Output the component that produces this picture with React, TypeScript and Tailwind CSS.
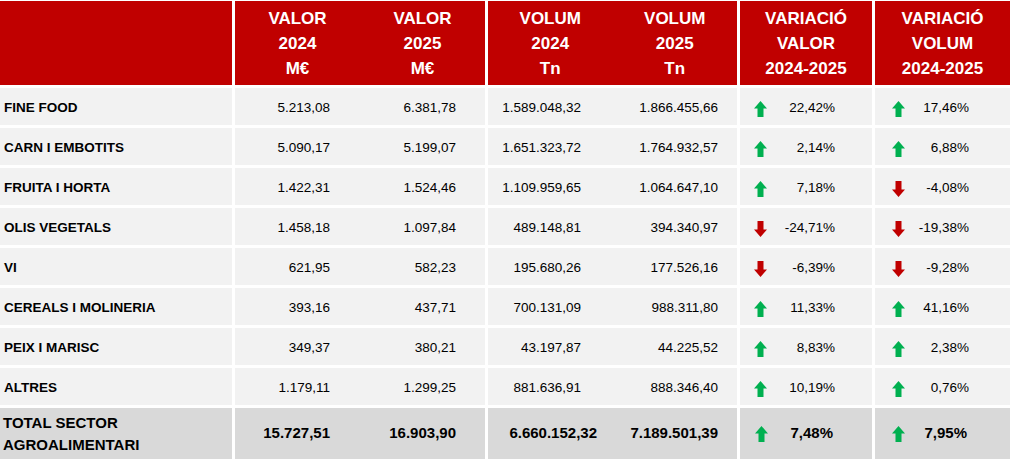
import React from "react";

type Row = {
  name: string;
  v24: string;
  v25: string;
  t24: string;
  t25: string;
  varV: string;
  upV: boolean;
  varT: string;
  upT: boolean;
};

const rows: Row[] = [
  { name: "FINE FOOD", v24: "5.213,08", v25: "6.381,78", t24: "1.589.048,32", t25: "1.866.455,66", varV: "22,42%", upV: true, varT: "17,46%", upT: true },
  { name: "CARN I EMBOTITS", v24: "5.090,17", v25: "5.199,07", t24: "1.651.323,72", t25: "1.764.932,57", varV: "2,14%", upV: true, varT: "6,88%", upT: true },
  { name: "FRUITA I HORTA", v24: "1.422,31", v25: "1.524,46", t24: "1.109.959,65", t25: "1.064.647,10", varV: "7,18%", upV: true, varT: "-4,08%", upT: false },
  { name: "OLIS VEGETALS", v24: "1.458,18", v25: "1.097,84", t24: "489.148,81", t25: "394.340,97", varV: "-24,71%", upV: false, varT: "-19,38%", upT: false },
  { name: "VI", v24: "621,95", v25: "582,23", t24: "195.680,26", t25: "177.526,16", varV: "-6,39%", upV: false, varT: "-9,28%", upT: false },
  { name: "CEREALS I MOLINERIA", v24: "393,16", v25: "437,71", t24: "700.131,09", t25: "988.311,80", varV: "11,33%", upV: true, varT: "41,16%", upT: true },
  { name: "PEIX I MARISC", v24: "349,37", v25: "380,21", t24: "43.197,87", t25: "44.225,52", varV: "8,83%", upV: true, varT: "2,38%", upT: true },
  { name: "ALTRES", v24: "1.179,11", v25: "1.299,25", t24: "881.636,91", t25: "888.346,40", varV: "10,19%", upV: true, varT: "0,76%", upT: true },
];

function Arrow({ up }: { up: boolean }) {
  return (
    <svg width="13" height="16" viewBox="0 0 13 16" className="shrink-0">
      {up ? (
        <polygon points="6.5,0 13,7.5 9.5,7.5 9.5,16 3.5,16 3.5,7.5 0,7.5" fill="#00b050" />
      ) : (
        <polygon points="3.5,0 9.5,0 9.5,8.5 13,8.5 6.5,16 0,8.5 3.5,8.5" fill="#c00000" />
      )}
    </svg>
  );
}

function Head({ lines }: { lines: string[] }) {
  return (
    <div className="flex-1 flex flex-col items-center justify-center text-white font-bold text-[17px] leading-[25px]">
      {lines.map((l, i) => (
        <span key={i}>{l}</span>
      ))}
    </div>
  );
}

function VarCell({ up, value, pl, pr, bold }: { up: boolean; value: string; pl: string; pr: string; bold?: boolean }) {
  return (
    <div className={`flex items-center justify-between ${pl} ${pr} ${bold ? "bg-[#d9d9d9] font-bold text-[15px]" : "bg-[#f2f2f2] pt-[4px]"}`}>
      <Arrow up={up} />
      <span>{value}</span>
    </div>
  );
}

export default function App() {
  return (
    <div className="w-[1010px] h-[459px] bg-white pt-[1px] overflow-hidden" style={{ fontFamily: '"Liberation Sans", Arial, sans-serif' }}>
      <div className="grid grid-cols-[232px_250px_249px_132px_135px] grid-rows-[84px_repeat(8,37px)_51px] gap-[3px] text-black text-[13.5px]">
        {/* header */}
        <div className="bg-[#c00000]" />
        <div className="bg-[#c00000] flex">
          <Head lines={["VALOR", "2024", "M€"]} />
          <Head lines={["VALOR", "2025", "M€"]} />
        </div>
        <div className="bg-[#c00000] flex">
          <Head lines={["VOLUM", "2024", "Tn"]} />
          <Head lines={["VOLUM", "2025", "Tn"]} />
        </div>
        <div className="bg-[#c00000] flex">
          <Head lines={["VARIACIÓ", "VALOR", "2024-2025"]} />
        </div>
        <div className="bg-[#c00000] flex">
          <Head lines={["VARIACIÓ", "VOLUM", "2024-2025"]} />
        </div>

        {rows.map((r) => (
          <React.Fragment key={r.name}>
            <div className="bg-[#f2f2f2] flex items-center pl-[4px] pt-[4px] font-bold">{r.name}</div>
            <div className="bg-[#f2f2f2] flex items-center pt-[4px]">
              <span className="w-[125px] text-right pr-[30px]">{r.v24}</span>
              <span className="w-[125px] text-right pr-[29px]">{r.v25}</span>
            </div>
            <div className="bg-[#f2f2f2] flex items-center pt-[4px]">
              <span className="w-[125px] text-right pr-[32px]">{r.t24}</span>
              <span className="w-[124px] text-right pr-[19px]">{r.t25}</span>
            </div>
            <VarCell up={r.upV} value={r.varV} pl="pl-[14px]" pr="pr-[37px]" />
            <VarCell up={r.upT} value={r.varT} pl="pl-[17px]" pr="pr-[41px]" />
          </React.Fragment>
        ))}

        {/* total */}
        <div className="bg-[#d9d9d9] flex flex-col justify-center pl-[3px] font-bold text-[15px] leading-[22px]">
          <span>TOTAL SECTOR</span>
          <span>AGROALIMENTARI</span>
        </div>
        <div className="bg-[#d9d9d9] flex items-center font-bold text-[15px]">
          <span className="w-[125px] text-right pr-[30px]">15.727,51</span>
          <span className="w-[125px] text-right pr-[29px]">16.903,90</span>
        </div>
        <div className="bg-[#d9d9d9] flex items-center font-bold text-[15px]">
          <span className="w-[125px] text-right pr-[16px]">6.660.152,32</span>
          <span className="w-[124px] text-right pr-[19px]">7.189.501,39</span>
        </div>
        <VarCell up value="7,48%" pl="pl-[15px]" pr="pr-[39px]" bold />
        <VarCell up value="7,95%" pl="pl-[17px]" pr="pr-[43px]" bold />
      </div>
    </div>
  );
}
